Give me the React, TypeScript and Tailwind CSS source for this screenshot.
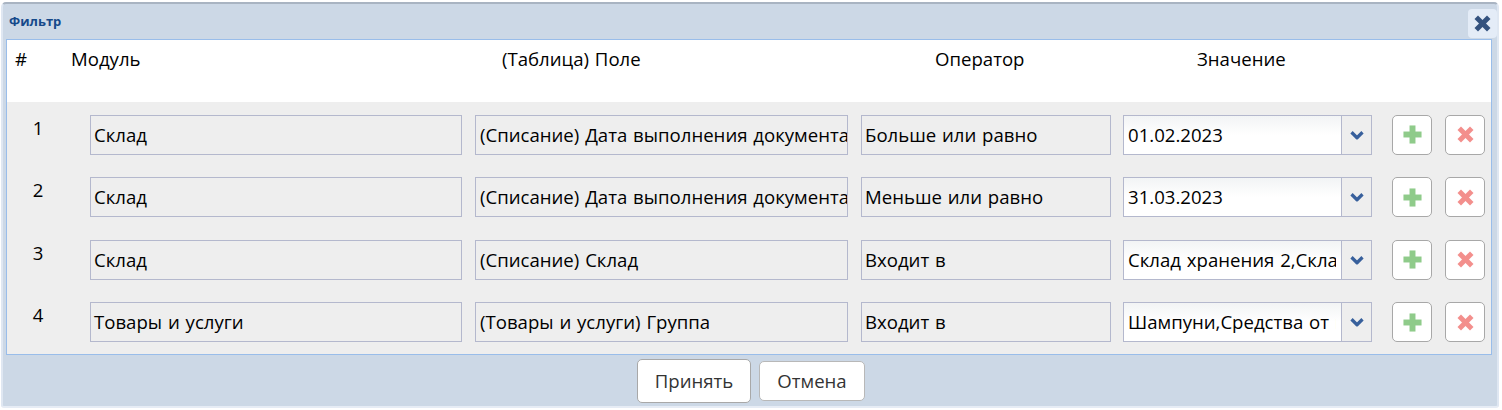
import React from 'react';
import { X, ChevronDown, Plus } from 'lucide-react';

const rows = [
  { n: 1, module: 'Склад', field: '(Списание) Дата выполнения документа', op: 'Больше или равно', value: '01.02.2023' },
  { n: 2, module: 'Склад', field: '(Списание) Дата выполнения документа', op: 'Меньше или равно', value: '31.03.2023' },
  { n: 3, module: 'Склад', field: '(Списание) Склад', op: 'Входит в', value: 'Склад хранения 2,Склад хранения 3' },
  { n: 4, module: 'Товары и услуги', field: '(Товары и услуги) Группа', op: 'Входит в', value: 'Шампуни,Средства от выпадения' },
];

const ReadOnlyBox: React.FC<{ text: string; width: string; pad: string }> = ({ text, width, pad }) => (
  <div className={`${width} ${pad} h-10 shrink-0 overflow-hidden whitespace-nowrap border border-[#b4b8cd] bg-[#eeeeee] leading-[38px]`}>
    {text}
  </div>
);

const App: React.FC = () => {
  return (
    <div className="h-[410px] w-[1502px] overflow-hidden bg-white pt-[2px] font-['Open_Sans','Noto_Sans',sans-serif] text-[18.6px] text-black [word-spacing:1px]">
      <div className="ml-px h-[406px] w-[1498px] rounded-t-[5px] rounded-b-[3px] border-x-2 border-t-2 border-b-2 border-x-[#dfe7f2] border-t-[#a9b4c2] border-b-[#e6ecf5] bg-[#ccd8e6] px-[3px]">
        {/* Title bar */}
        <div className="flex h-[35px] items-center justify-between">
          <span className="pl-[3px] pt-px text-[13px] font-bold text-[#15498a]">Фильтр</span>
          <button className="mr-[-3px] mt-[3px] flex h-[29px] w-[29px] items-center justify-center rounded-[4px] bg-[#e4ecf7] text-[#34527f]">
            <X size={25} strokeWidth={4.8} strokeLinecap="butt" />
          </button>
        </div>

        {/* Table */}
        <div className="h-[316px] w-[1486px] border border-[#99bdea] bg-[#eeeeee]">
          <div className="flex h-[62px] items-start bg-white pt-[7px] leading-[24px]">
            <div className="w-[64px] pl-2">#</div>
            <div className="w-[431px]">Модуль</div>
            <div className="w-[433px]">(Таблица) Поле</div>
            <div className="w-[262px]">Оператор</div>
            <div>Значение</div>
          </div>
          <div className="pt-[12.75px]">
            {rows.map((row) => (
              <div key={row.n} className="flex h-[62.5px] items-start">
                <div className="w-[83px] shrink-0 pr-[21px] pt-px text-center leading-[24px]">{row.n}</div>
                <ReadOnlyBox text={row.module} width="w-[372px]" pad="pl-[3px]" />
                <div className="w-[13px] shrink-0" />
                <ReadOnlyBox text={row.field} width="w-[373px]" pad="pl-1" />
                <div className="w-[13px] shrink-0" />
                <ReadOnlyBox text={row.op} width="w-[250px]" pad="pl-[3px]" />
                <div className="ml-3 flex h-10 w-[249px] shrink-0 border border-[#b4b8cd]">
                  <div className="min-w-0 flex-1 bg-gradient-to-b from-[#f2f4f5] via-white to-white pl-1 pr-[5px] leading-[38px]">
                    <div className="overflow-hidden whitespace-nowrap">{row.value}</div>
                  </div>
                  <div className="flex w-[30px] shrink-0 items-center justify-center border-l border-[#b4b8cd] bg-[#eeeeee] text-[#38609c]">
                    <ChevronDown size={22} strokeWidth={3.5} strokeLinecap="butt" />
                  </div>
                </div>
                <button className="ml-5 flex h-10 w-10 shrink-0 items-center justify-center rounded-[5px] border border-[#a8a8a8] bg-white text-[#8fcb8a]">
                  <Plus size={31} strokeWidth={4.6} strokeLinecap="butt" />
                </button>
                <button className="ml-[13px] flex h-10 w-10 shrink-0 items-center justify-center rounded-[5px] border border-[#a8a8a8] bg-white text-[#f38f8c]">
                  <X size={25} strokeWidth={4.8} strokeLinecap="butt" />
                </button>
              </div>
            ))}
          </div>
        </div>

        {/* Footer */}
        <div className="flex h-[51px] items-center justify-center gap-2 pl-[2px]">
          <button className="h-[44px] w-[114px] rounded-[5px] border border-[#a8a8a8] bg-white text-[#333333]">Принять</button>
          <button className="h-10 w-[106px] rounded-[5px] border border-[#b8b8b8] bg-white text-[#333333]">Отмена</button>
        </div>
      </div>
    </div>
  );
};

export default App;
